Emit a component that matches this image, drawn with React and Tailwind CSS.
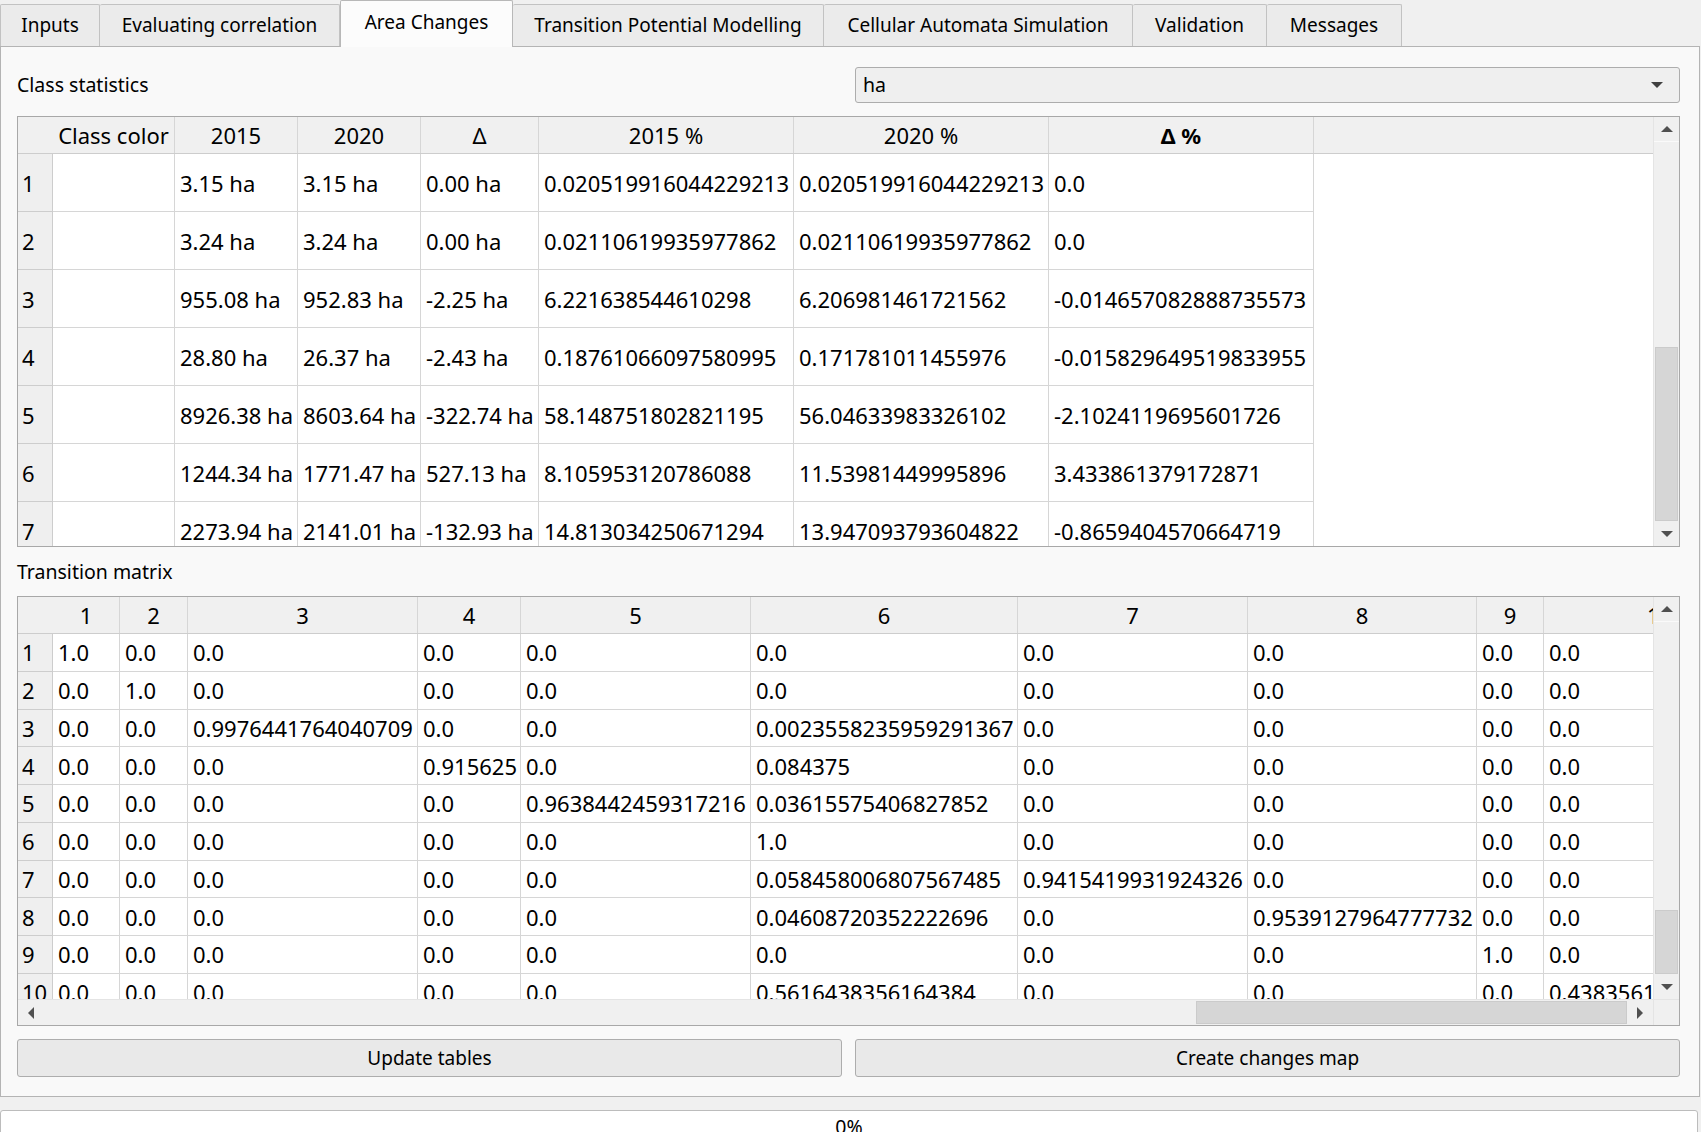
import React from "react";

const tabs = [
  { label: "Inputs", w: "w-[100px]" },
  { label: "Evaluating correlation", w: "w-[240px]" },
  { label: "Area Changes", w: "w-[173px]", active: true },
  { label: "Transition Potential Modelling", w: "w-[311px]" },
  { label: "Cellular Automata Simulation", w: "w-[309px]" },
  { label: "Validation", w: "w-[134px]" },
  { label: "Messages", w: "w-[135px]" },
];

// class statistics table
const statCols = ["w-[122px]", "w-[123px]", "w-[123px]", "w-[118px]", "w-[255px]", "w-[255px]", "w-[265px]"];
const statHeaders = ["Class color", "2015", "2020", "Δ", "2015 %", "2020 %", "Δ %"];
const statRows = [
  ["", "3.15 ha", "3.15 ha", "0.00 ha", "0.020519916044229213", "0.020519916044229213", "0.0"],
  ["", "3.24 ha", "3.24 ha", "0.00 ha", "0.02110619935977862", "0.02110619935977862", "0.0"],
  ["", "955.08 ha", "952.83 ha", "-2.25 ha", "6.221638544610298", "6.206981461721562", "-0.014657082888735573"],
  ["", "28.80 ha", "26.37 ha", "-2.43 ha", "0.18761066097580995", "0.171781011455976", "-0.015829649519833955"],
  ["", "8926.38 ha", "8603.64 ha", "-322.74 ha", "58.148751802821195", "56.04633983326102", "-2.1024119695601726"],
  ["", "1244.34 ha", "1771.47 ha", "527.13 ha", "8.105953120786088", "11.53981449995896", "3.433861379172871"],
  ["", "2273.94 ha", "2141.01 ha", "-132.93 ha", "14.813034250671294", "13.947093793604822", "-0.8659404570664719"],
];

// transition matrix
const transCols = [
  "w-[67px]", "w-[68px]", "w-[230px]", "w-[103px]", "w-[230px]",
  "w-[267px]", "w-[230px]", "w-[229px]", "w-[67px]", "w-[232px]",
];
const z = "0.0";
const transRows = [
  ["1.0", z, z, z, z, z, z, z, z, z],
  [z, "1.0", z, z, z, z, z, z, z, z],
  [z, z, "0.9976441764040709", z, z, "0.0023558235959291367", z, z, z, z],
  [z, z, z, "0.915625", z, "0.084375", z, z, z, z],
  [z, z, z, z, "0.9638442459317216", "0.03615575406827852", z, z, z, z],
  [z, z, z, z, z, "1.0", z, z, z, z],
  [z, z, z, z, z, "0.058458006807567485", "0.9415419931924326", z, z, z],
  [z, z, z, z, z, "0.04608720352222696", z, "0.9539127964777732", z, z],
  [z, z, z, z, z, z, z, z, "1.0", z],
  [z, z, z, z, z, "0.5616438356164384", z, z, z, "0.4383561643835616"],
];

function Arrow({ dir }) {
  const pts = {
    up: "0,6 6,0 12,6",
    down: "0,0 12,0 6,6",
    left: "6,0 6,12 0,6",
    right: "0,0 0,12 6,6",
  }[dir];
  const vert = dir === "up" || dir === "down";
  return (
    <svg width={vert ? 12 : 6} height={vert ? 6 : 12} viewBox={vert ? "0 0 12 6" : "0 0 6 12"}>
      <polygon points={pts} fill="#505050" />
    </svg>
  );
}

function VScroll({ thumb }) {
  return (
    <div className="w-[26px] shrink-0 flex flex-col bg-[#f0f0f0] border-l border-[#e4e4e4]">
      <div className="h-[25px] shrink-0 flex items-center justify-center border-b border-[#fafafa]">
        <Arrow dir="up" />
      </div>
      <div className="flex-1 flex flex-col justify-end px-px">
        <div className={`${thumb} bg-[#d6d6d6] border border-[#cbcbcb]`} />
      </div>
      <div className="h-[25px] shrink-0 flex items-center justify-center">
        <Arrow dir="down" />
      </div>
    </div>
  );
}

function HScroll() {
  return (
    <div className="h-[26px] shrink-0 flex border-t border-[#e4e4e4]">
      <div className="flex-1 flex bg-[#f0f0f0]">
        <div className="w-[26px] shrink-0 flex items-center justify-center">
          <Arrow dir="left" />
        </div>
        <div className="flex-1 flex justify-end py-px">
          <div className="w-[431px] bg-[#d6d6d6] border border-[#cbcbcb]" />
        </div>
        <div className="w-[26px] shrink-0 flex items-center justify-center">
          <Arrow dir="right" />
        </div>
      </div>
      <div className="w-[26px] shrink-0 bg-[#f0f0f0] border-l border-[#e4e4e4]" />
    </div>
  );
}

function StatsTable() {
  return (
    <div className="h-full border border-[#a8a8a8] flex bg-white">
      <div className="flex-1 min-w-0 overflow-hidden flex flex-col text-[22px]">
        <div className="h-[37px] shrink-0 flex bg-[#f0f0f0] border-b border-[#cdcdcd]">
          <div className="w-[35px] shrink-0" />
          {statHeaders.map((h, i) => (
            <div
              key={h}
              className={`${statCols[i]} shrink-0 flex items-center justify-center border-r border-[#d6d6d6] whitespace-nowrap ${
                i === 6 ? "font-bold" : ""
              }`}
            >
              {h}
            </div>
          ))}
        </div>
        {statRows.map((row, r) => (
          <div key={r} className="h-[58px] shrink-0 flex">
            <div className="w-[35px] shrink-0 flex items-center px-[4px] bg-[#efefef] border-r border-b border-[#cdcdcd]">
              {r + 1}
            </div>
            {row.map((v, i) => (
              <div
                key={i}
                className={`${statCols[i]} shrink-0 flex items-center px-[5px] border-r border-b border-[#d6d6d6] whitespace-nowrap overflow-hidden`}
              >
                {v}
              </div>
            ))}
          </div>
        ))}
      </div>
      <VScroll thumb="h-[174px]" />
    </div>
  );
}

function TransitionTable() {
  return (
    <div className="h-full border border-[#a8a8a8] flex flex-col bg-white">
      <div className="flex-1 min-h-0 flex">
        <div className="flex-1 min-w-0 overflow-hidden flex flex-col text-[22px]">
          <div className="h-[37px] shrink-0 flex bg-[#f0f0f0] border-b border-[#cdcdcd]">
            <div className="w-[35px] shrink-0" />
            {transCols.map((w, i) => (
              <div
                key={i}
                className={`${w} shrink-0 flex items-center justify-center border-r border-[#d6d6d6]`}
              >
                {i + 1}
              </div>
            ))}
          </div>
          {transRows.map((row, r) => (
            <div key={r} className="h-[37.75px] shrink-0 flex">
              <div className="w-[35px] shrink-0 flex items-center px-[4px] bg-[#efefef] border-r border-b border-[#cdcdcd]">
                {r + 1}
              </div>
              {row.map((v, i) => (
                <div
                  key={i}
                  className={`${transCols[i]} shrink-0 flex items-center px-[5px] border-r border-b border-[#d6d6d6] whitespace-nowrap overflow-hidden`}
                >
                  {v}
                </div>
              ))}
            </div>
          ))}
        </div>
        <VScroll thumb="h-[64px]" />
      </div>
      <HScroll />
    </div>
  );
}

export default function App() {
  return (
    <div className="w-[1701px] h-[1132px] overflow-hidden bg-[#f0f0f0] font-['Noto_Sans',sans-serif] text-black leading-none">
      {/* tab bar */}
      <div className="h-[46px] flex items-end">
        {tabs.map((t, i) =>
          t.active ? (
            <div
              key={t.label}
              className={`${t.w} h-[47px] -mb-px relative z-10 flex items-center justify-center pb-[3px] text-[19px] bg-[#fcfcfc] border-t border-l border-r border-[#b8b8b8] rounded-t-[2px]`}
            >
              {t.label}
            </div>
          ) : (
            <div
              key={t.label}
              className={`${t.w} h-[42px] flex items-center justify-center text-[19px] bg-[#ebebeb] border-t border-r border-[#c2c2c2] rounded-t-[2px] ${
                i === 0 ? "border-l" : ""
              }`}
            >
              {t.label}
            </div>
          )
        )}
      </div>

      {/* tab pane */}
      <div className="w-[1700px] h-[1051px] border border-[#b4b4b4] bg-[#f9f9f9] pl-[16px] pr-[19px] pt-[20px] pb-[19px] flex flex-col">
        <div className="grid grid-cols-2 gap-[13px] h-[36px] shrink-0">
          <div className="flex items-center text-[19.5px]">Class statistics</div>
          <div className="flex items-center justify-between border border-[#adadad] rounded-[3px] bg-[#efefef] pl-[7px] pr-[16px] text-[19.5px]">
            <span>ha</span>
            <svg width="12" height="6" viewBox="0 0 12 6">
              <polygon points="0,0 12,0 6,6" fill="#404040" />
            </svg>
          </div>
        </div>

        <div className="mt-[13px] h-[431px] shrink-0">
          <StatsTable />
        </div>

        <div className="h-[49px] shrink-0 flex items-center text-[19.5px]">Transition matrix</div>

        <div className="h-[430px] shrink-0">
          <TransitionTable />
        </div>

        <div className="mt-[13px] grid grid-cols-2 gap-[13px] h-[38px] shrink-0">
          <button className="border border-[#adadad] rounded-[3px] bg-[#e9e9e9] text-[19px] flex items-center justify-center">
            Update tables
          </button>
          <button className="border border-[#adadad] rounded-[3px] bg-[#e9e9e9] text-[19px] flex items-center justify-center">
            Create changes map
          </button>
        </div>
      </div>

      <div className="h-[13px]" />

      {/* progress bar */}
      <div className="w-[1698px] h-[34px] border border-[#bcbcbc] rounded-[3px] bg-white flex items-center justify-center text-[19.5px]">
        0%
      </div>
    </div>
  );
}
